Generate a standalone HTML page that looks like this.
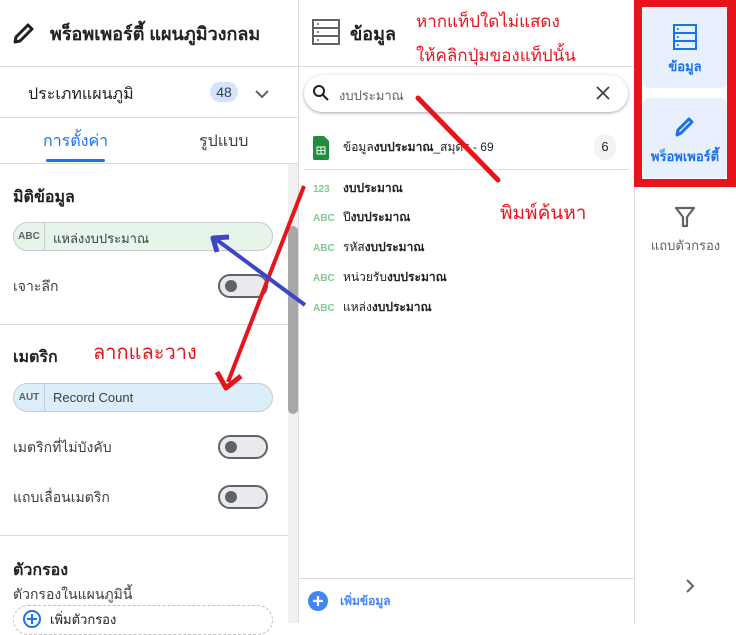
<!DOCTYPE html>
<html><head><meta charset="utf-8"><style>
*{box-sizing:border-box;margin:0;padding:0}
body{width:736px;height:623px;overflow:hidden;background:#fff;font-family:"Liberation Sans","Noto Sans CJK SC",sans-serif;color:#202124;position:relative}
.a{position:absolute}
.chip{position:absolute;left:13px;width:260px;height:29px;border-radius:15px;border:1px solid #c8ccd0;font-size:13px;color:#3c4043}
.chip b{position:absolute;left:0;top:0;width:31px;height:27px;border-right:1px solid #c8ccd0;font-size:10px;color:#5f6368;line-height:27px;text-align:center}
.chip span{position:absolute;left:39px;top:5px}
.tg{position:absolute;left:218px;width:50px;height:24px;border:2px solid #5f6368;border-radius:12px;background:#e8eaed}
.tg:after{content:"";position:absolute;left:5px;top:4px;width:12px;height:12px;border-radius:50%;background:#5f6368}
.lbl{position:absolute;left:13px;font-size:14px;color:#3c4043}
.h{position:absolute;left:13px;font-size:16px;font-weight:bold}
.it{position:absolute;left:313px;font-size:12px}
.it i{font-style:normal;color:#81c995;font-size:10px;display:inline-block;width:30px;font-weight:bold}
.red{color:#e8141c;position:absolute}
</style></head><body>
<div class="a" style="left:298px;top:0;width:1px;height:623px;background:#dadce0"></div>
<svg class="a" style="left:12px;top:21px" width="24" height="24" viewBox="0 0 24 24"><path d="M3 21l1-5L16 4l4 4L8 20z" fill="none" stroke="#202124" stroke-width="3" stroke-linejoin="round"/></svg>
<div class="a" style="left:50px;top:19px;font-size:18px;font-weight:bold">พร็อพเพอร์ตี้ แผนภูมิวงกลม</div>
<div class="a" style="left:0;top:66px;width:298px;height:1px;background:#dadce0"></div>
<div class="a" style="left:28px;top:82px;font-size:16px">ประเภทแผนภูมิ</div>
<div class="a" style="left:210px;top:82px;width:28px;height:20px;border-radius:10px;background:#d3e3fd;font-size:14px;text-align:center;line-height:20px;color:#3c4043">48</div>
<svg class="a" style="left:254px;top:89px" width="16" height="10"><path d="M2 2l6 6 6-6" fill="none" stroke="#5f6368" stroke-width="2"/></svg>
<div class="a" style="left:0;top:117px;width:298px;height:1px;background:#dadce0"></div>
<div class="a" style="left:43px;top:129px;font-size:16px;color:#1a73e8">การตั้งค่า</div>
<div class="a" style="left:199px;top:129px;font-size:16px;color:#3c4043">รูปแบบ</div>
<div class="a" style="left:46px;top:159px;width:59px;height:3px;border-radius:2px;background:#1a73e8"></div>
<div class="a" style="left:0;top:163px;width:298px;height:1px;background:#dadce0"></div>
<div class="a" style="left:288px;top:164px;width:10px;height:459px;background:#f1f1f1"></div>
<div class="a" style="left:288px;top:226px;width:10px;height:188px;background:#a8a8a8;border-radius:5px"></div>
<div class="h" style="top:185px">มิติข้อมูล</div>
<div class="chip" style="top:222px;background:#e6f4ea"><b>ABC</b><span>แหล่งงบประมาณ</span></div>
<div class="lbl" style="top:276px">เจาะลึก</div><div class="tg" style="top:274px"></div>
<div class="a" style="left:0;top:324px;width:288px;height:1px;background:#dadce0"></div>
<div class="h" style="top:345px">เมตริก</div>
<div class="chip" style="top:383px;background:#ddeefb"><b>AUT</b><span style="top:6px">Record Count</span></div>
<div class="lbl" style="top:437px">เมตริกที่ไม่บังคับ</div><div class="tg" style="top:435px"></div>
<div class="lbl" style="top:487px">แถบเลื่อนเมตริก</div><div class="tg" style="top:485px"></div>
<div class="a" style="left:0;top:535px;width:288px;height:1px;background:#dadce0"></div>
<div class="h" style="top:558px">ตัวกรอง</div>
<div class="lbl" style="top:584px">ตัวกรองในแผนภูมินี้</div>
<div class="a" style="left:13px;top:605px;width:260px;height:30px;border:1px dashed #bdc1c6;border-radius:15px"></div>
<svg class="a" style="left:22px;top:609px" width="20" height="20"><circle cx="10" cy="10" r="8" fill="none" stroke="#1a73e8" stroke-width="2"/><path d="M10 5v10M5 10h10" stroke="#1a73e8" stroke-width="2"/></svg>
<div class="a" style="left:50px;top:609px;font-size:13px">เพิ่มตัวกรอง</div>
<svg class="a" style="left:312px;top:19px" width="28" height="26"><rect x="1" y="1" width="26" height="24" fill="none" stroke="#5f6368" stroke-width="2"/><path d="M1 9h26M1 17h26" stroke="#5f6368" stroke-width="2"/><path d="M5 5h2M5 13h2M5 21h2" stroke="#5f6368" stroke-width="1.5"/></svg>
<div class="a" style="left:350px;top:19px;font-size:18px;font-weight:bold">ข้อมูล</div>
<div class="a" style="left:299px;top:66px;width:335px;height:1px;background:#dadce0"></div>
<div class="a" style="left:304px;top:75px;width:324px;height:37px;border-radius:19px;box-shadow:0 1px 3px rgba(0,0,0,.35);background:#fff"></div>
<svg class="a" style="left:312px;top:84px" width="18" height="18"><circle cx="7" cy="7" r="5" fill="none" stroke="#202124" stroke-width="2"/><path d="M11 11l5 5" stroke="#202124" stroke-width="2"/></svg>
<div class="a" style="left:339px;top:85px;font-size:13px;color:#5f6368">งบประมาณ</div>
<svg class="a" style="left:596px;top:86px" width="14" height="14"><path d="M1 1l12 12M13 1L1 13" stroke="#3c4043" stroke-width="1.8"/></svg>
<svg class="a" style="left:313px;top:136px" width="16" height="24"><path d="M0 2a2 2 0 012-2h9l5 5v17a2 2 0 01-2 2H2a2 2 0 01-2-2z" fill="#1e8e3e"/><rect x="4" y="11" width="8" height="7" fill="none" stroke="#fff" stroke-width="1"/><path d="M4 14.5h8M8 11v7" stroke="#fff"/></svg>
<div class="a" style="left:343px;top:138px;font-size:12px">ข้อมูล<b>งบประมาณ</b>_สมุดร - 69</div>
<div class="a" style="left:594px;top:134px;width:22px;height:26px;border-radius:11px;background:#f1f3f4;font-size:13px;text-align:center;line-height:26px">6</div>
<div class="a" style="left:304px;top:169px;width:325px;height:1px;background:#dadce0"></div>
<div class="it" style="top:179px"><i>123</i><b>งบประมาณ</b></div>
<div class="it" style="top:208px"><i>ABC</i>ปี<b>งบประมาณ</b></div>
<div class="it" style="top:238px"><i>ABC</i>รหัส<b>งบประมาณ</b></div>
<div class="it" style="top:268px"><i>ABC</i>หน่วยรับ<b>งบประมาณ</b></div>
<div class="it" style="top:298px"><i>ABC</i>แหล่ง<b>งบประมาณ</b></div>
<div class="a" style="left:299px;top:578px;width:335px;height:1px;background:#dadce0"></div>
<svg class="a" style="left:308px;top:591px" width="20" height="20"><circle cx="10" cy="10" r="10" fill="#4285f4"/><path d="M10 5v10M5 10h10" stroke="#fff" stroke-width="2.2"/></svg>
<div class="a" style="left:340px;top:592px;font-size:12px;color:#4285f4;font-weight:bold">เพิ่มข้อมูล</div>
<div class="a" style="left:634px;top:0;width:1px;height:623px;background:#dadce0"></div>
<div class="a" style="left:634px;top:0;width:102px;height:187px;background:#e8141c"></div>
<div class="a" style="left:642px;top:7px;width:85px;height:172px;background:#fff"></div>
<div class="a" style="left:643px;top:8px;width:84px;height:80px;background:#e8f0fe;border-radius:6px"></div>
<div class="a" style="left:643px;top:98px;width:84px;height:80px;background:#e8f0fe;border-radius:6px"></div>
<svg class="a" style="left:673px;top:24px" width="24" height="26"><rect x="1" y="1" width="22" height="24" fill="none" stroke="#1a73e8" stroke-width="2"/><path d="M1 9h22M1 17h22" stroke="#1a73e8" stroke-width="2"/><path d="M4 5h2M4 13h2M4 21h2" stroke="#1a73e8" stroke-width="1.5"/></svg>
<div class="a" style="left:643px;top:56px;width:84px;text-align:center;font-size:13px;color:#1a73e8;font-weight:bold">ข้อมูล</div>
<svg class="a" style="left:673px;top:114px" width="24" height="24" viewBox="0 0 24 24"><path d="M4 21l1-5L16 5l3 3L8 19z" fill="none" stroke="#1a73e8" stroke-width="3" stroke-linejoin="round"/></svg>
<div class="a" style="left:643px;top:146px;width:84px;text-align:center;font-size:13px;color:#1a73e8;font-weight:bold;white-space:nowrap">พร็อพเพอร์ตี้</div>
<svg class="a" style="left:674px;top:206px" width="22" height="22"><path d="M2 2h18l-7 9v9h-4v-9z" fill="none" stroke="#5f6368" stroke-width="2.2" stroke-linejoin="round"/></svg>
<div class="a" style="left:635px;top:235px;width:101px;text-align:center;font-size:13px;color:#5f6368">แถบตัวกรอง</div>
<svg class="a" style="left:685px;top:578px" width="12" height="16"><path d="M2 2l6 6-6 6" fill="none" stroke="#5f6368" stroke-width="2"/></svg>
<div class="red" style="left:416px;top:8px;font-size:17px">หากแท็ปใดไม่แสดง</div>
<div class="red" style="left:416px;top:42px;font-size:17px">ให้คลิกปุ่มของแท็ปนั้น</div>
<div class="red" style="left:500px;top:198px;font-size:19px">พิมพ์ค้นหา</div>
<div class="red" style="left:93px;top:336px;font-size:20px">ลากและวาง</div>
<svg class="a" style="left:0;top:0" width="736" height="623">
<path d="M418 98L498 180" stroke="#e8141c" stroke-width="5" stroke-linecap="round"/>
<path d="M304 186L228 382" stroke="#e8141c" stroke-width="4"/>
<path d="M217 372L226 388L241 376" fill="none" stroke="#e8141c" stroke-width="5" stroke-linejoin="round"/>
<path d="M305 305L217 240" stroke="#3d44c8" stroke-width="4"/>
<path d="M217 252L213 238L229 237" fill="none" stroke="#3d44c8" stroke-width="5" stroke-linejoin="round"/>
</svg>
</body></html>
